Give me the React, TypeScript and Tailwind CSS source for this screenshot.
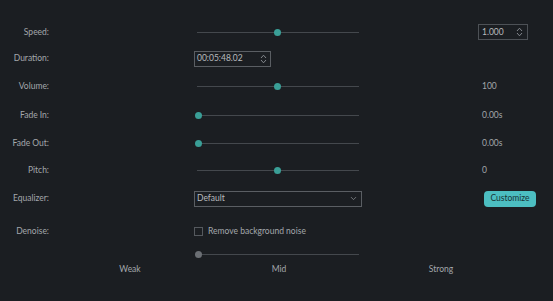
import { ChevronDown } from "lucide-react";

const font = { fontFamily: "Lato, 'Open Sans', sans-serif" };

function Spinner() {
  return (
    <svg width="7" height="10" viewBox="0 0 7 10" fill="none" className="text-[#8d9196]">
      <path d="M1 4 L3.5 1.2 L6 4" stroke="currentColor" strokeWidth="0.9" strokeLinejoin="round" />
      <path d="M1 6 L3.5 8.8 L6 6" stroke="currentColor" strokeWidth="0.9" strokeLinejoin="round" />
    </svg>
  );
}

function Slider({ pos, muted }: { pos: number; muted?: boolean }) {
  return (
    <div className="relative flex h-[8px] w-[165px] items-center pl-[3px]">
      <div className="h-px w-full bg-[#44484d]" />
      <span
        className={
          "absolute top-[0.5px] h-[7px] w-[7px] rounded-full " +
          (muted ? "bg-[#6b6f74]" : "bg-[#3a9f97]")
        }
        style={{ left: `${pos}px` }}
      />
    </div>
  );
}

function Row({
  label,
  h,
  children,
  value
}: {
  label?: string;
  h: string;
  children?: React.ReactNode;
  value?: React.ReactNode;
}) {
  return (
    <div className={"flex items-center " + h}>
      <div className="w-[49px] shrink-0 text-right">{label}</div>
      <div className="ml-[145px] w-[170px] shrink-0">{children}</div>
      <div className="ml-[114px]">{value}</div>
    </div>
  );
}

export default function App() {
  return (
    <div
      className="h-[301px] w-[553px] overflow-hidden bg-[#1b1e22] pt-[19px] text-[8.5px] text-[#a3a7ab]"
      style={font}
    >
      <Row
        label="Speed:"
        h="h-[26px]"
        value={
          <div className="flex h-[16px] w-[50px] items-center justify-between border border-[#4d5156] pl-[3px] pr-[4px] text-[#b8bbbe]">
            <span>1.000</span>
            <Spinner />
          </div>
        }
      >
        <Slider pos={80} />
      </Row>
      <Row label="Duration:" h="h-[27px]">
        <div className="flex h-[16px] w-[77px] items-center justify-between border border-[#5a5e63] pl-[2px] pr-[3px] text-[#b8bbbe]">
          <span>00:05:48.02</span>
          <Spinner />
        </div>
      </Row>
      <Row label="Volume:" h="h-[29px]" value={<span className="ml-[4px]">100</span>}>
        <Slider pos={80} />
      </Row>
      <Row label="Fade In:" h="h-[28px]" value={<span className="ml-[4px]">0.00s</span>}>
        <Slider pos={1} />
      </Row>
      <Row label="Fade Out:" h="h-[28px]" value={<span className="ml-[4px]">0.00s</span>}>
        <Slider pos={1} />
      </Row>
      <Row label="Pitch:" h="h-[27px]" value={<span className="ml-[4px]">0</span>}>
        <Slider pos={80} />
      </Row>
      <Row
        label="Equalizer:"
        h="h-[29px]"
        value={
          <button
            type="button"
            className="ml-[6px] h-[16px] w-[52px] rounded-[4px] bg-[#4cbec1] text-[8.5px] text-[#173437]"
          >
            Customize
          </button>
        }
      >
        <div className="flex h-[16px] w-[168px] items-center justify-between border border-[#5a5e63] pl-[2px] pr-[3px] text-[#b8bbbe]">
          <span>Default</span>
          <ChevronDown className="h-[9px] w-[9px] text-[#8d9196]" strokeWidth={2} />
        </div>
      </Row>
      <Row label="Denoise:" h="h-[36px]">
        <div className="flex items-center gap-[5px]">
          <span className="h-[9px] w-[9px] border border-[#55595e]" />
          <span>Remove background noise</span>
        </div>
      </Row>
      <Row h="h-[10px]">
        <Slider pos={1} muted />
      </Row>
      <div className="flex h-[21px] items-center">
        <div className="ml-[100px] w-[60px] text-center">Weak</div>
        <div className="ml-[89px] w-[60px] text-center">Mid</div>
        <div className="ml-[102px] w-[60px] text-center">Strong</div>
      </div>
    </div>
  );
}
